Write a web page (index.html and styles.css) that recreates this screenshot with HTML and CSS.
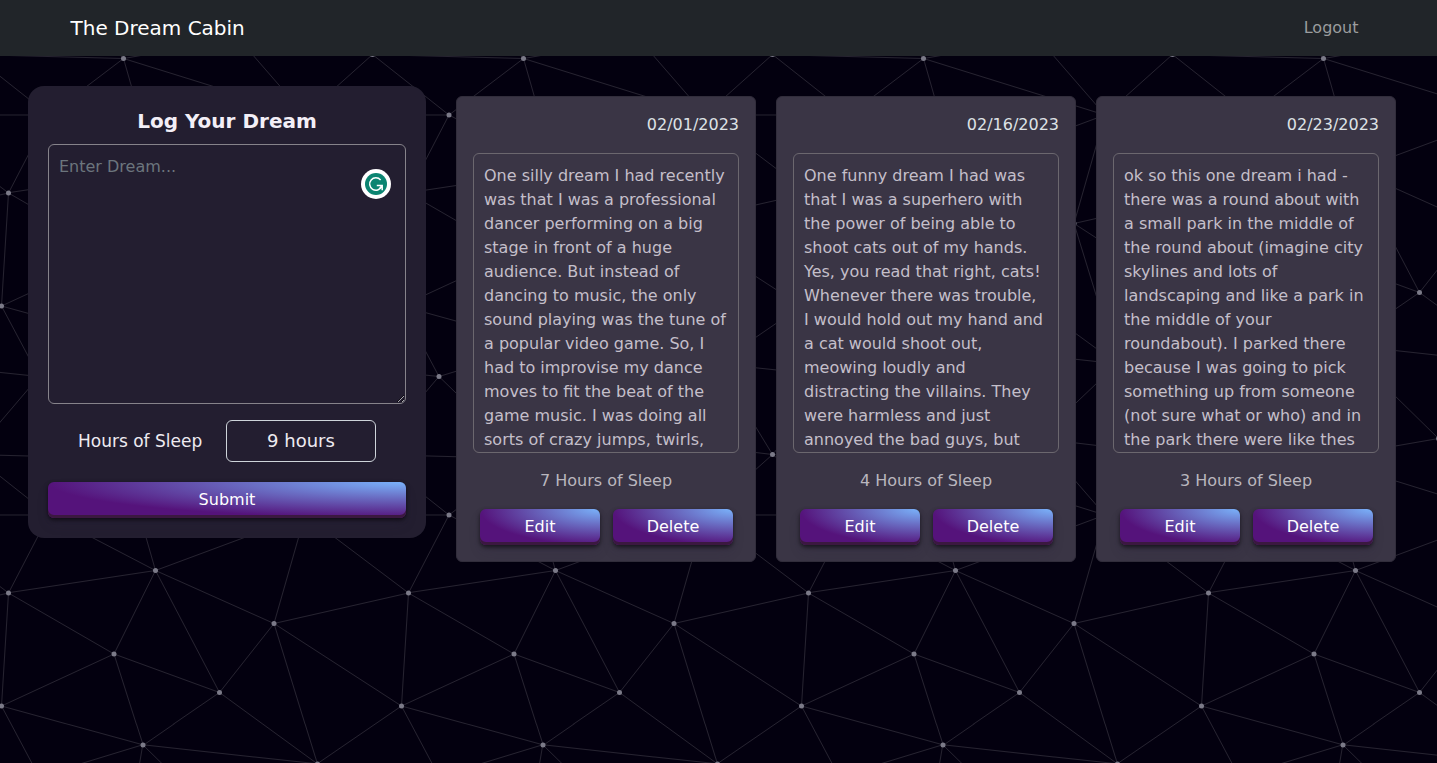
FILE: index.html
```html
<!DOCTYPE html>
<html lang="en">
<head>
<meta charset="utf-8">
<meta name="viewport" content="width=device-width, initial-scale=1">
<title>The Dream Cabin</title>
<link rel="stylesheet" href="styles.css">
</head>
<body>
<nav class="navbar">
  <div class="navbar-inner">
    <a class="brand" href="#">The Dream Cabin</a>
    <a class="nav-link" href="#">Logout</a>
  </div>
</nav>
<main class="dashboard">
  <form class="dream-form">
    <h1 class="form-title"><label for="dream">Log Your Dream</label></h1>
    <div class="editor">
      <textarea class="dream-input" id="dream" placeholder="Enter Dream..."></textarea>
      <button class="checker" type="button" aria-label="Check writing">
        <svg viewBox="0 0 30 30" width="30" height="30" aria-hidden="true">
          <circle cx="15" cy="15" r="15" fill="#fff"/>
          <circle cx="15" cy="15" r="11" fill="#0b8471"/>
          <path d="M19.600 11A6.200 6.200 0 1 0 20.600 17.400M15.800 16.600H21.200V21.200M21 16.800L18.600 19.600" fill="none" stroke="#fff" stroke-width="1.500"/>
        </svg>
      </button>
    </div>
    <div class="sleep-row">
      <label for="sleep">Hours of Sleep</label>
      <select class="sleep-select" id="sleep">
        <option>3 hours</option>
        <option>4 hours</option>
        <option>7 hours</option>
        <option selected>9 hours</option>
      </select>
    </div>
    <button class="button" type="submit">Submit</button>
  </form>
  <section class="dreams" aria-label="Dreams">
    <article class="card">
      <time class="date" datetime="2023-02-01">02/01/2023</time>
      <p class="dream-text">One silly dream I had recently
was that I was a professional
dancer performing on a big
stage in front of a huge
audience. But instead of
dancing to music, the only
sound playing was the tune of
a popular video game. So, I
had to improvise my dance
moves to fit the beat of the
game music. I was doing all
sorts of crazy jumps, twirls,</p>
      <p class="hours">7 Hours of Sleep</p>
      <div class="actions">
        <button class="button" type="button">Edit</button>
        <button class="button" type="button">Delete</button>
      </div>
    </article>
    <article class="card">
      <time class="date" datetime="2023-02-16">02/16/2023</time>
      <p class="dream-text">One funny dream I had was
that I was a superhero with
the power of being able to
shoot cats out of my hands.
Yes, you read that right, cats!
Whenever there was trouble,
I would hold out my hand and
a cat would shoot out,
meowing loudly and
distracting the villains. They
were harmless and just
annoyed the bad guys, but</p>
      <p class="hours">4 Hours of Sleep</p>
      <div class="actions">
        <button class="button" type="button">Edit</button>
        <button class="button" type="button">Delete</button>
      </div>
    </article>
    <article class="card">
      <time class="date" datetime="2023-02-23">02/23/2023</time>
      <p class="dream-text">ok so this one dream i had -
there was a round about with
a small park in the middle of
the round about (imagine city
skylines and lots of
landscaping and like a park in
the middle of your
roundabout). I parked there
because I was going to pick
something up from someone
(not sure what or who) and in
the park there were like thes</p>
      <p class="hours">3 Hours of Sleep</p>
      <div class="actions">
        <button class="button" type="button">Edit</button>
        <button class="button" type="button">Delete</button>
      </div>
    </article>
  </section>
</main>
</body>
</html>
```
FILE: styles.css
```css
* {
  box-sizing: border-box;
}

body {
  margin: 0;
  min-height: 100vh;
  color: #dee2e6;
  font-family: Verdana, "DejaVu Sans", sans-serif;
  font-size: 16px;
  line-height: 24px;
  background-color: #03000f;
  background-image: url("data:image/svg+xml,%3Csvg xmlns='http://www.w3.org/2000/svg' width='400' height='400' viewBox='0 0 800 800'%3E%3Cg fill='none' stroke='%23262330' stroke-width='2'%3E%3Cpath d='M769 229L1037 260.9M927 880L731 737 520 660 309 538 40 599 295 764 126.5 879.5 40 599-197 493 102 382-31 229 126.5 79.5-69-63'/%3E%3Cpath d='M-31 229L237 261 390 382 603 493 308.5 537.5 101.5 381.5M370 905L295 764'/%3E%3Cpath d='M520 660L578 842 731 737 840 599 603 493 520 660 295 764 309 538 390 382 539 269 769 229 577.5 41.5 370 105 295 -36 126.5 79.5 237 261 102 382 40 599 -69 737 127 880'/%3E%3Cpath d='M520-140L578.5 42.5 731-63M603 493L539 269 237 261 370 105M902 382L539 269M390 382L102 382'/%3E%3Cpath d='M-222 42L126.5 79.5 370 105 539 269 577.5 41.5 927 80 769 229 902 382 603 493 731 737M295-36L577.5 41.5M578 842L295 764M40-201L127 80M102 382L-261 269'/%3E%3C/g%3E%3Cg fill='%237b7a88'%3E%3Ccircle cx='769' cy='229' r='5'/%3E%3Ccircle cx='539' cy='269' r='5'/%3E%3Ccircle cx='603' cy='493' r='5'/%3E%3Ccircle cx='731' cy='737' r='5'/%3E%3Ccircle cx='520' cy='660' r='5'/%3E%3Ccircle cx='309' cy='538' r='5'/%3E%3Ccircle cx='295' cy='764' r='5'/%3E%3Ccircle cx='40' cy='599' r='5'/%3E%3Ccircle cx='102' cy='382' r='5'/%3E%3Ccircle cx='127' cy='80' r='5'/%3E%3Ccircle cx='370' cy='105' r='5'/%3E%3Ccircle cx='578' cy='42' r='5'/%3E%3Ccircle cx='237' cy='261' r='5'/%3E%3Ccircle cx='390' cy='382' r='5'/%3E%3C/g%3E%3C/svg%3E");
  background-position: 254px 324px;
}

button,
select,
textarea {
  font: inherit;
}

.navbar {
  background: #212529;
}

.navbar-inner {
  display: flex;
  align-items: center;
  justify-content: space-between;
  max-width: 1320px;
  min-height: 56px;
  margin: 0 auto;
  padding: 0 12px;
}

.brand {
  color: #fff;
  font-size: 20px;
  line-height: 30px;
  text-decoration: none;
}

.nav-link {
  padding: 8px;
  color: #9b9d9f;
  text-decoration: none;
}

.dashboard {
  display: flex;
  align-items: flex-start;
  justify-content: center;
  gap: 30px;
  padding: 30px 41px 30px 28px;
}

.dream-form {
  display: flex;
  flex: 0 0 398px;
  flex-direction: column;
  padding: 20px;
  border-radius: 16px;
  background: #231e30;
}

.form-title {
  margin: 0 0 8px;
  color: #f3eff7;
  font-size: 20px;
  font-weight: 700;
  line-height: 30px;
  text-align: center;
}

.editor {
  position: relative;
  display: flex;
}

.dream-input {
  flex: 1;
  height: 260px;
  padding: 10px;
  border: 1px solid #86838a;
  border-radius: 6px;
  color: #dee2e6;
  background: transparent;
  resize: vertical;
}

.dream-input::placeholder {
  color: #6c757d;
  opacity: 1;
}

.checker {
  position: absolute;
  top: 25px;
  right: 15px;
  display: flex;
  padding: 0;
  border: 0;
  border-radius: 50%;
  background: none;
}

.sleep-row {
  display: flex;
  align-items: center;
  justify-content: space-between;
  margin: 16px 0 20px;
  padding: 0 30px;
  color: #eeebf1;
  font-size: 17px;
}

.sleep-select {
  width: 150px;
  height: 42px;
  border: 1px solid #ced4da;
  border-radius: 6px;
  color: #eeebf1;
  font-size: 18px;
  text-align: center;
  text-align-last: center;
  background: transparent;
  appearance: none;
}

.button {
  flex: 1;
  min-height: 36px;
  padding: 0;
  border: 0;
  border-radius: 6px;
  color: #fff;
  line-height: 36px;
  background: radial-gradient(100% 100% at 100% 0, #7ab3fb 0, #55137b 100%);
  box-shadow: rgba(0, 0, 0, 0.6) 0 2px 4px, rgba(45, 35, 66, 0.3) 0 7px 13px -3px, #3b1840 0 -3px 0 inset;
}

.dreams {
  display: flex;
  flex: 1;
  gap: 20px;
  padding-top: 10px;
}

.card {
  display: flex;
  flex: 1;
  flex-direction: column;
  min-width: 0;
  padding: 16px;
  border: 1px solid #312d3b;
  border-radius: 6px;
  background: #3a3545;
}

.date {
  margin-bottom: 16px;
  text-align: right;
}

.dream-text {
  height: 300px;
  margin: 0 0 16px;
  padding: 10px;
  overflow: hidden;
  border: 1px solid #6b676e;
  border-radius: 6px;
  color: #c4bfca;
  white-space: pre;
}

.hours {
  margin: 0 0 16px;
  color: #b9b6be;
  text-align: center;
}

.actions {
  display: flex;
  gap: 13px;
  padding: 0 6px 0 7px;
}
```
